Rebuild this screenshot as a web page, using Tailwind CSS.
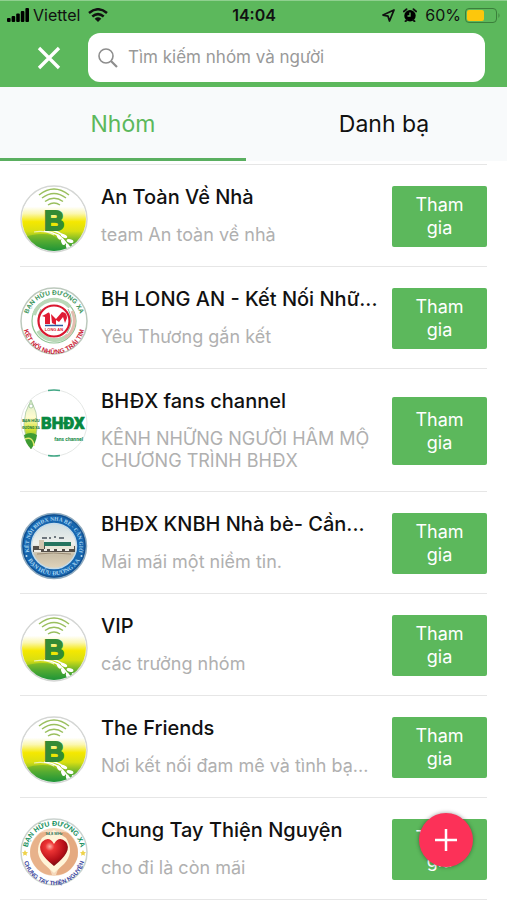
<!DOCTYPE html>
<html lang="vi">
<head>
<meta charset="utf-8">
<meta name="viewport" content="width=device-width, initial-scale=1">
<title>Nhóm</title>
<script src="https://cdn.jsdelivr.net/npm/@tailwindcss/browser@4"></script>
</head>
<body class="bg-white text-[#111] font-[Inter,'Noto_Sans',sans-serif]">
<svg class="absolute size-0" aria-hidden="true">
  <defs>
    <linearGradient id="field" x1="0" y1="0" x2="0" y2="1">
      <stop offset=".32" stop-color="#fff"/><stop offset=".42" stop-color="#fbf7b0"/><stop offset=".54" stop-color="#f5e800"/><stop offset=".68" stop-color="#d9df12"/><stop offset=".82" stop-color="#6db52d"/><stop offset="1" stop-color="#078a3b"/>
    </linearGradient>
    <clipPath id="disc"><circle cx="34" cy="34" r="32"/></clipPath>
    <symbol id="b-logo" viewBox="0 0 68 68">
      <circle cx="34" cy="34" r="33" fill="#fff" stroke="#d4d6d4" stroke-width="1.5"/>
      <g clip-path="url(#disc)">
        <rect width="68" height="68" fill="url(#field)"/>
        <path d="M0 54Q16 47 32 50Q44 57 50 68H0Z" fill="#2c9c38" opacity=".35"/>
        <path d="M14 47Q25 45 34 50" fill="none" stroke="#eef5b0" stroke-width="1.2"/>
        <path d="M24 46Q38 47 46 58L53 66M29 45Q39 46 45 52" fill="none" stroke="#fff" stroke-width="1.6"/>
        <g fill="#fff"><ellipse cx="39" cy="52" rx="3" ry="1.6" transform="rotate(55 39 52)"/><ellipse cx="44" cy="51" rx="3.4" ry="1.7" transform="rotate(25 44 51)"/><ellipse cx="43" cy="57" rx="3.2" ry="1.7" transform="rotate(70 43 57)"/><ellipse cx="50" cy="56" rx="3.5" ry="1.8" transform="rotate(15 50 56)"/><ellipse cx="48" cy="62" rx="3.4" ry="1.8" transform="rotate(70 48 62)"/><ellipse cx="55" cy="61" rx="3.4" ry="1.8" transform="rotate(20 55 61)"/></g>
      </g>
      <g fill="none" stroke="#9abf5e" stroke-width="1.5"><path d="M28 20q6-4 12 0M25 16.500q9-6.500 18 0M22 13q12-9 24 0M19 10q15-12 30 0"/></g>
      <text x="34" y="45" text-anchor="middle" font-family="Liberation Sans" font-weight="700" font-size="28" fill="#348b34" stroke="#348b34" stroke-width="1.8">B</text>
    </symbol>
    <path id="arc-top" d="M7.500 40A27 27 0 1 1 60.500 40"/>
    <path id="arc-bottom" d="M3 36A31 31 0 0 0 65 36"/>
    <path id="arc-ring" d="M10 42A25.300 25.300 0 1 1 58 42"/>
    <path id="arc-ring-low" d="M4.500 36A29.600 29.600 0 0 0 63.500 36"/>
    <linearGradient id="leaf" x1="0" y1="0" x2="0" y2="1"><stop offset="0" stop-color="#d8edc9"/><stop offset=".35" stop-color="#fffbd0"/><stop offset=".6" stop-color="#d8e334"/><stop offset="1" stop-color="#188b3a"/></linearGradient>
    <radialGradient id="heart" cx=".35" cy=".28" r=".75"><stop offset="0" stop-color="#ffb0a5"/><stop offset=".22" stop-color="#ed3434"/><stop offset=".7" stop-color="#b50f18"/><stop offset="1" stop-color="#720b10"/></radialGradient>
    <linearGradient id="sky" x1="0" y1="0" x2="0" y2="1"><stop offset="0" stop-color="#cfdde0"/><stop offset=".45" stop-color="#eef0ec"/><stop offset=".7" stop-color="#c9bda6"/><stop offset="1" stop-color="#e0d4bc"/></linearGradient>
  </defs>
</svg>

<header class="bg-[#5cb85c] border-t border-[#8fd08f]">
  <div class="grid grid-cols-3 items-center h-7 pl-[7px] pr-[6px] text-base leading-7">
    <div class="flex items-center gap-1">
      <svg class="w-[22px] h-[14px]" viewBox="0 0 22 14" aria-hidden="true"><g><rect y="10" width="3.600" height="4" rx="1"/><rect x="4.600" y="8" width="3.600" height="6" rx="1"/><rect x="9.200" y="5.500" width="3.600" height="8.500" rx="1"/><rect x="13.800" y="3" width="3.600" height="11" rx="1"/><rect x="18.400" width="3.600" height="14" rx="1"/></g></svg>
      <span>Viettel</span>
      <svg class="ml-1 w-5 h-[14px]" viewBox="0 0 20 14" fill="none" stroke="#111" stroke-width="2.500" aria-hidden="true"><path d="M1 5Q10-2.500 19 5M4.300 8.500Q10 3.700 15.700 8.500"/><path d="M10 14 6.700 10.700Q10 8 13.300 10.700Z" fill="#111" stroke="none"/></svg>
    </div>
    <time class="text-center font-semibold">14:04</time>
    <div class="flex items-center justify-end gap-2">
      <svg class="w-[13px] h-[13px]" viewBox="0 0 13 13" fill="none" stroke="#111" stroke-width="1.800" stroke-linejoin="round" aria-hidden="true"><path d="M12 1 1 6l5 1.200L7.500 12Z"/></svg>
      <svg class="size-[14px]" viewBox="0 0 14 14" aria-hidden="true"><circle cx="7" cy="7.800" r="5.700"/><path d="M.8 3.500 3.500 1.200M13.200 3.500 10.500 1.200M2.500 13.300 4 12M11.500 13.300 10 12" stroke="#111" stroke-width="1.800" stroke-linecap="round"/><path d="M7 4.500V8H4.500" fill="none" stroke="#5cb85c" stroke-width="1.300"/></svg>
      <div class="flex items-center gap-1"><span>60%</span>
      <svg class="w-9 h-[15px]" viewBox="0 0 36 15" aria-hidden="true"><rect x=".5" y=".5" width="31" height="14" rx="3.500" fill="none" stroke="#3b7f3b"/><rect x="2" y="2" width="17" height="11" rx="2" fill="#fdc70c"/><path d="M33.500 5q2 2.500 0 5Z" fill="#3b7f3b"/></svg></div>
    </div>
  </div>
  <div class="flex items-center pt-1 pb-[5px] pr-[22px]">
    <button type="button" aria-label="Đóng" class="flex justify-center w-[88px] pl-[10px]">
      <svg class="size-6" viewBox="0 0 24 24" fill="none" stroke="#fff" stroke-width="3.300"><path d="M2 2 22 22M22 2 2 22"/></svg>
    </button>
    <label class="flex flex-1 items-center gap-[10px] h-[49px] px-[10px] rounded-xl bg-white">
      <svg class="size-5 shrink-0" viewBox="0 0 20 20" fill="none" stroke="#8d8d8d" stroke-width="1.600" aria-hidden="true"><circle cx="8" cy="8" r="7"/><path d="m13 13 6 6" stroke-width="2.200"/></svg>
      <input type="search" aria-label="Tìm kiếm nhóm và người" placeholder="Tìm kiếm nhóm và người" class="flex-1 min-w-0 text-[17px] placeholder:text-[#999] outline-none">
    </label>
  </div>
</header>

<nav class="flex justify-between h-[74px] bg-[#f8fafb] text-[23px]">
  <a href="#nhom" aria-current="page" class="flex items-center justify-center w-[48.5%] pt-1 border-b-[3px] border-[#5aaf60] text-[#5cb85c]">Nhóm</a>
  <a href="#danhba" class="flex items-center justify-center w-[48.5%] pt-1 border-b-[3px] border-transparent">Danh bạ</a>
</nav>

<main id="nhom" class="px-5 pt-[3px]">
  <ul class="border-t border-[#e6e6e6]">
    <li class="flex items-center gap-[13px] min-h-[102px] pt-5 pb-[19px] border-b border-[#e6e6e6]">
      <svg class="size-[68px] shrink-0 self-start -mb-2" role="img" aria-label="An Toàn Về Nhà"><use href="#b-logo"/></svg>
      <div class="flex-1 min-w-0 self-start whitespace-nowrap"><h2 class="text-xl leading-6 font-medium">An Toàn Về Nhà</h2><p class="mt-[15px] text-[18px] leading-[22px] text-[#b0b0b0]">team An toàn về nhà</p></div>
      <button type="button" class="w-[95px] h-[61px] px-4 shrink-0 rounded-xs bg-[#5cb85c] text-white text-[18px] leading-[23px]">Tham gia</button>
    </li>
    <li class="flex items-center gap-[13px] min-h-[102px] pt-5 pb-[19px] border-b border-[#e6e6e6]">
      <svg class="size-[68px] shrink-0 self-start -mb-2" viewBox="0 0 68 68" role="img" aria-label="BH Long An">
        <circle cx="34" cy="34" r="33" fill="#fff" stroke="#bcc9bd" stroke-width="1.500"/>
        <g fill="none"><circle cx="34" cy="34" r="22" stroke="#8fc493" stroke-width="1.200"/><path d="M14 28A21 21 0 0 1 50 20M18 44A20 20 0 0 0 48 48" stroke="#b9d8b8" stroke-width="4"/><path d="M52 24A21 21 0 0 1 45 51" stroke="#e2bcae" stroke-width="3"/><path d="M21 22Q15 33 22 45M48 22q7 12-1 24" stroke="#8abb91"/><circle cx="34" cy="34" r="15.500" fill="#fff" stroke="#d9182f" stroke-width="2.200"/></g>
        <path d="M26 27q4-4 4 2v8h-5v-7l-3-1ZM32 36l-1-9 5 5 6-7q5 0 5 6l-2 5-2-6-4 5-3-2v5Z" fill="#e01c33"/>
        <path d="M25 38.500h18" stroke="#275ca2" stroke-width="1.500"/>
        <text x="34" y="44" text-anchor="middle" font-family="Liberation Sans" font-weight="700" font-size="4" fill="#d9182f">LONG AN</text>
        <text font-family="Liberation Sans" font-weight="700" font-size="6.500" fill="#39945a" text-anchor="middle"><textPath href="#arc-top" startOffset="50%">BẠN HỮU ĐƯỜNG XA</textPath></text>
        <text font-family="Liberation Sans" font-weight="700" font-size="6.500" fill="#c92136" text-anchor="middle"><textPath href="#arc-bottom" startOffset="50%">KẾT NỐI NHỮNG TRÁI TIM</textPath></text>
      </svg>
      <div class="flex-1 min-w-0 self-start whitespace-nowrap"><h2 class="text-xl leading-6 font-medium">BH LONG AN - Kết Nối Nhữ...</h2><p class="mt-[15px] text-[18px] leading-[22px] text-[#b0b0b0]">Yêu Thương gắn kết</p></div>
      <button type="button" class="w-[95px] h-[61px] px-4 shrink-0 rounded-xs bg-[#5cb85c] text-white text-[18px] leading-[23px]">Tham gia</button>
    </li>
    <li class="flex items-center gap-[13px] min-h-[102px] pt-5 pb-[19px] border-b border-[#e6e6e6]">
      <svg class="size-[68px] shrink-0 self-start" viewBox="0 0 68 68" role="img" aria-label="BHĐX fans channel">
        <circle cx="34" cy="34" r="33" fill="#fff" stroke="#e5e8e6"/><path d="M28 1.400q6-1 12 0M28 66.600q6 1 12 0" fill="none" stroke="#44a887" stroke-width="1.500"/>
        <path d="M11 11Q24 35 11 60Q-3 35 11 11Z" fill="url(#leaf)" stroke="#a8c9a4" stroke-width=".8"/>
        <path d="M4 46Q11 42 17 46Q16 54 11 60Q5 54 4 46Z" fill="#3e9b33"/><path d="M5 50Q13 47 14 57" fill="none" stroke="#dce76a" stroke-width="1.500"/>
        <circle cx="11" cy="17" r="2" fill="#fff" stroke="#8eb78d" stroke-width=".7"/>
        <text x="11" y="33" text-anchor="middle" font-family="Roboto" font-weight="700" font-size="4" fill="#16773a">BẠN HỮU</text><text x="11" y="40" text-anchor="middle" font-family="Roboto" font-weight="700" font-size="3.500" fill="#16773a">ĐƯỜNG XA</text>
        <text x="21" y="40" font-family="Roboto" font-weight="900" font-size="16.500" fill="#078840" stroke="#078840" stroke-width=".7">BHĐX</text>
        <text x="63" y="52" text-anchor="end" font-family="Roboto" font-weight="700" font-size="5" fill="#168b48">fans channel</text>
      </svg>
      <div class="flex-1 min-w-0 self-start whitespace-nowrap"><h2 class="text-xl leading-6 font-medium">BHĐX fans channel</h2><p class="mt-[15px] text-[18px] leading-[22px] text-[#b0b0b0]">KÊNH NHỮNG NGƯỜI HÂM MỘ<br>CHƯƠNG TRÌNH BHĐX</p></div>
      <button type="button" class="w-[95px] h-[68px] px-4 shrink-0 rounded-xs bg-[#5cb85c] text-white text-[18px] leading-[23px]">Tham gia</button>
    </li>
    <li class="flex items-center gap-[13px] min-h-[102px] pt-5 pb-[19px] border-b border-[#e6e6e6]">
      <svg class="size-[68px] shrink-0 self-start -mb-2" viewBox="0 0 68 68" role="img" aria-label="BHĐX KNBH Nhà bè">
        <circle cx="34" cy="34" r="32.500" fill="#1766ae" stroke="#8fa9bd" stroke-width="1.500"/><circle cx="34" cy="34" r="31" fill="none" stroke="#134b88"/>
        <circle cx="34" cy="34" r="22.500" fill="url(#sky)" stroke="#c4dbea" stroke-width="1.500"/>
        <path d="M13 34h42v6H13Z" fill="#544e48"/><path d="M19 28h5v9h-5Z" fill="#d3c5af"/><path d="M24 30h27v4H24Z" fill="#26745f"/><path d="M25 34h29v3H25Z" fill="#e9e7d9"/><path d="M14 39h7M24 38h3M30 38h4M37 38h5M45 38h4" stroke="#f1eee8" stroke-width="2"/><path d="M22 26h5M29 26h2M34 25h2M39 26h5" stroke="#46515b" stroke-width="1.500"/><path d="M17 42q16-2 34 0" fill="none" stroke="#9c8c75"/>
        <text font-family="Liberation Serif" font-weight="700" font-size="5.500" fill="#a9d8f5" text-anchor="middle"><textPath href="#arc-ring" startOffset="50%">KẾT NỐI BHĐX NHÀ BÈ - CẦN GIỜ</textPath></text>
        <text font-family="Liberation Serif" font-weight="700" font-size="6" fill="#a9d8f5" text-anchor="middle"><textPath href="#arc-ring-low" startOffset="50%">BẠN HỮU ĐƯỜNG XA</textPath></text>
        <circle cx="6.500" cy="44" r="1" fill="#c5e2f3"/><circle cx="61.500" cy="44" r="1" fill="#c5e2f3"/>
      </svg>
      <div class="flex-1 min-w-0 self-start whitespace-nowrap"><h2 class="text-xl leading-6 font-medium">BHĐX KNBH Nhà bè- Cần...</h2><p class="mt-[15px] text-[18px] leading-[22px] text-[#b0b0b0]">Mãi mãi một niềm tin.</p></div>
      <button type="button" class="w-[95px] h-[61px] px-4 shrink-0 rounded-xs bg-[#5cb85c] text-white text-[18px] leading-[23px]">Tham gia</button>
    </li>
    <li class="flex items-center gap-[13px] min-h-[102px] pt-5 pb-[19px] border-b border-[#e6e6e6]">
      <svg class="size-[68px] shrink-0 self-start -mb-2" role="img" aria-label="VIP"><use href="#b-logo"/></svg>
      <div class="flex-1 min-w-0 self-start whitespace-nowrap"><h2 class="text-xl leading-6 font-medium">VIP</h2><p class="mt-[15px] text-[18px] leading-[22px] text-[#b0b0b0]">các trưởng nhóm</p></div>
      <button type="button" class="w-[95px] h-[61px] px-4 shrink-0 rounded-xs bg-[#5cb85c] text-white text-[18px] leading-[23px]">Tham gia</button>
    </li>
    <li class="flex items-center gap-[13px] min-h-[102px] pt-5 pb-[19px] border-b border-[#e6e6e6]">
      <svg class="size-[68px] shrink-0 self-start -mb-2" role="img" aria-label="The Friends"><use href="#b-logo"/></svg>
      <div class="flex-1 min-w-0 self-start whitespace-nowrap"><h2 class="text-xl leading-6 font-medium">The Friends</h2><p class="mt-[15px] text-[18px] leading-[22px] text-[#b0b0b0]">Nơi kết nối đam mê và tình bạ...</p></div>
      <button type="button" class="w-[95px] h-[61px] px-4 shrink-0 rounded-xs bg-[#5cb85c] text-white text-[18px] leading-[23px]">Tham gia</button>
    </li>
    <li class="flex items-center gap-[13px] min-h-[102px] pt-5 pb-[19px] border-b border-[#e6e6e6]">
      <svg class="size-[68px] shrink-0 self-start -mb-2" viewBox="0 0 68 68" role="img" aria-label="Chung Tay Thiện Nguyện">
        <circle cx="34" cy="34" r="33" fill="#fff" stroke="#cbd3cf" stroke-width="1.500"/>
        <circle cx="34" cy="34" r="24" fill="#f5d9bd"/>
        <path d="M20 15Q7 27 11 41Q18 57 32 57Q30 49 23 44Q17 35 23 23L29 15Q25 13 20 15Z" fill="#e8b28b"/><path d="M48 15Q61 27 57 41Q50 57 36 57Q38 49 45 44Q51 35 45 23L39 15Q43 13 48 15Z" fill="#e5aa81"/>
        <path d="M34 12 46 20Q55 34 44 46L34 55 24 46Q13 34 22 20Z" fill="#fff4d8"/>
        <path d="M34 48Q15 33 22 24Q29 17 34 26Q39 17 46 24Q53 33 34 48Z" fill="url(#heart)"/>
        <text x="34" y="17" text-anchor="middle" font-family="Liberation Sans" font-weight="700" font-size="4" fill="#2d755b">94,8 MHz</text>
        <text font-family="Liberation Sans" font-weight="700" font-size="7" fill="#168f5c" text-anchor="middle"><textPath href="#arc-top" startOffset="50%">BẠN HỮU ĐƯỜNG XA</textPath></text>
        <text font-family="Liberation Sans" font-weight="700" font-size="6" fill="#36419a" text-anchor="middle"><textPath href="#arc-bottom" startOffset="50%">CHUNG TAY THIỆN NGUYỆN</textPath></text>
        <path d="m5 32 1 2 2 .3-1.500 1.500.4 2-1.900-1-1.900 1 .4-2L2 34.300l2-.3ZM63 32l1 2 2 .3-1.500 1.500.4 2-1.900-1-1.900 1 .4-2-1.500-1.500 2-.3Z" fill="#efd34a"/>
      </svg>
      <div class="flex-1 min-w-0 self-start whitespace-nowrap"><h2 class="text-xl leading-6 font-medium">Chung Tay Thiện Nguyện</h2><p class="mt-[15px] text-[18px] leading-[22px] text-[#b0b0b0]">cho đi là còn mãi</p></div>
      <button type="button" class="w-[95px] h-[61px] px-4 shrink-0 rounded-xs bg-[#5cb85c] text-white text-[18px] leading-[23px]">Tham gia</button>
    </li>
  </ul>
</main>
<button type="button" aria-label="Thêm nhóm" class="fixed right-[34px] bottom-[33px] flex items-center justify-center size-[54px] rounded-full bg-[#fc3158] shadow-[0_0_4px_rgba(0,0,0,0.4)]">
  <svg class="size-6" viewBox="0 0 24 24" fill="none" stroke="#fff" stroke-width="2.500"><path d="M12 1V23M1 12H23"/></svg>
</button>
</body>
</html>
